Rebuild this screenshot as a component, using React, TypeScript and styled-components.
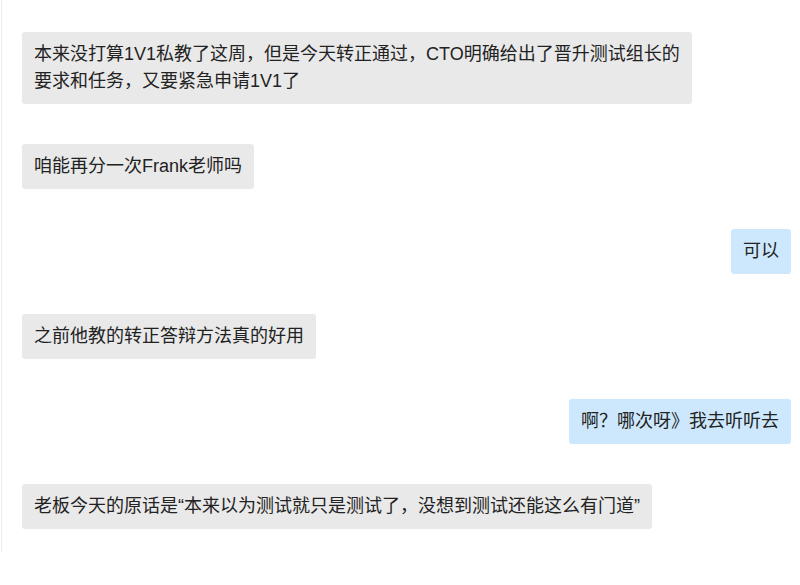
import styled, { createGlobalStyle } from 'styled-components'

type Message = { from: 'them' | 'me'; text: string }

const messages: Message[] = [
  { from: 'them', text: '本来没打算1V1私教了这周，但是今天转正通过，CTO明确给出了晋升测试组长的\n要求和任务，又要紧急申请1V1了' },
  { from: 'them', text: '咱能再分一次Frank老师吗' },
  { from: 'me', text: '可以' },
  { from: 'them', text: '之前他教的转正答辩方法真的好用' },
  { from: 'me', text: '啊？哪次呀》我去听听去' },
  { from: 'them', text: '老板今天的原话是“本来以为测试就只是测试了，没想到测试还能这么有门道”' },
]

function App() {
  return (
    <>
      <GlobalStyle />
      <Page>
        <Chat>
          {messages.map((m, i) => (
            <Row key={i} mine={m.from === 'me'}>
              <Bubble mine={m.from === 'me'}>{m.text}</Bubble>
            </Row>
          ))}
        </Chat>
      </Page>
    </>
  )
}

const GlobalStyle = createGlobalStyle`
html, body {
  margin: 0;
  padding: 0;
  background: #ffffff;
}
body {
  font-family: "Liberation Sans", "Noto Sans CJK SC", sans-serif;
}
`
const Page = styled.div`
width: 800px;
height: 585px;
overflow: hidden;
background: #fff;
`
const Chat = styled.div`
margin-left: 1px;
border-left: 1px solid #ececec;
display: flex;
flex-direction: column;
gap: 40px;
padding: 32px 9px 23px 20px;
`
const Row = styled.div<{ mine: boolean }>`
display: flex;
justify-content: ${props => (props.mine ? 'flex-end' : 'flex-start')};
`
const Bubble = styled.div<{ mine: boolean }>`
background: ${props => (props.mine ? '#cde8fd' : '#e9e9e9')};
color: #222;
font-size: 18px;
line-height: 27px;
padding: 9px 12px;
border-radius: 3px;
white-space: pre-line;
`

export default App
